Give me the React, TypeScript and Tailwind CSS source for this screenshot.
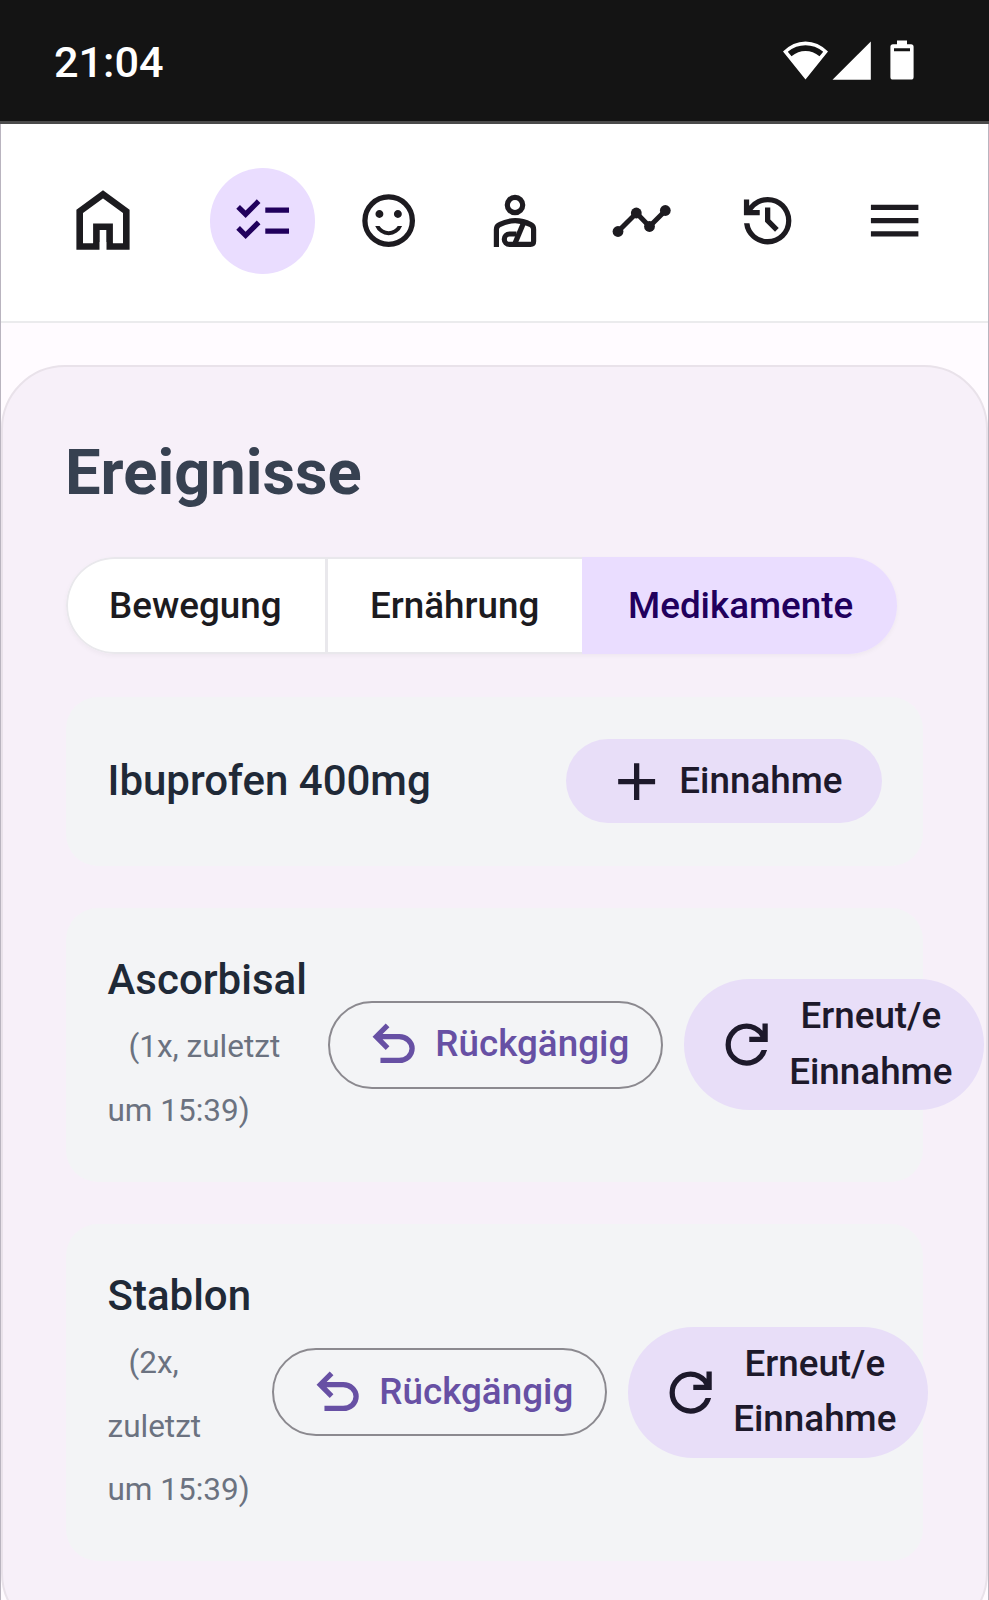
import React from "react";

const NAV = "#1d1b20";

function HomeIcon() {
  return (
    <svg className="w-[54px] h-[60px]" viewBox="0 0 54 60" fill="none" stroke="#1c1b1f" strokeWidth="6.6">
      <path d="M3.7 56.500V21.400L27 4.300 50.300 21.400V56.500H33.600V36.700H20.400V56.500Z" />
      <path d="M23.700 52h6.600v8h-6.600z" fill="#fff" stroke="none" />
    </svg>
  );
}

function Glyph({ d, color, className }: { d: string; color: string; className: string }) {
  return (
    <svg className={className} viewBox="0 -960 960 960" fill={color}>
      <path d={d} />
    </svg>
  );
}

const CHECKLIST =
  "M222-200 80-342l56-56 85 85 170-170 56 57-225 226Zm0-320L80-662l56-56 85 85 170-170 56 57-225 226Zm298 240v-80h360v80H520Zm0-320v-80h360v80H520Z";
const SMILE =
  "M620-520q25 0 42.500-17.500T680-580q0-25-17.500-42.500T620-640q-25 0-42.500 17.500T560-580q0 25 17.500 42.500T620-520Zm-280 0q25 0 42.500-17.500T400-580q0-25-17.500-42.500T340-640q-25 0-42.500 17.500T280-580q0 25 17.500 42.500T340-520Zm140 260q68 0 123.500-38.500T684-400h-66q-22 37-58.500 58.500T480-320q-43 0-79.500-21.500T342-400h-66q25 63 80.500 101.500T480-260Zm0 180q-83 0-156-31.500T197-197q-54-54-85.500-127T80-480q0-83 31.500-156T197-763q54-54 127-85.500T480-880q83 0 156 31.500T763-763q54 54 85.500 127T880-480q0 83-31.500 156T763-197q-54 54-127 85.500T480-80Zm0-80q134 0 227-93t93-227q0-134-93-227t-227-93q-134 0-227 93t-93 227q0 134 93 227t227 93Z";
const HISTORY =
  "M480-120q-138 0-240.500-91.500T122-440h82q14 104 92.500 172T480-200q117 0 198.500-81.500T760-480q0-117-81.500-198.500T480-760q-69 0-129 32t-101 88h110v80H120v-240h80v94q51-64 124.500-99T480-840q75 0 140.500 28.500t114 77q48.500 48.500 77 114T840-480q0 75-28.500 140.500t-77 114q-48.500 48.500-114 77T480-120Zm112-192L440-464v-216h80v184l128 128-56 56Z";
const REFRESH =
  "M480-160q-134 0-227-93t-93-227q0-134 93-227t227-93q69 0 132 28.500T720-690v-110h80v280H520v-80h168q-32-56-87.500-88T480-720q-100 0-170 70t-70 170q0 100 70 170t170 70q77 0 139-44t87-116h84q-28 106-114 173t-196 67Z";
const UNDO =
  "M280-200v-80h284q63 0 109.500-40T720-420q0-60-46.500-100T564-560H312l104 104-56 56-200-200 200-200 56 56-104 104h252q97 0 166.500 63T800-420q0 94-69.500 157T564-200H280Z";
const PLUS = "M440-440H200v-80h240v-240h80v240h240v80H520v240h-80v-240Z";
const MENU = "M120-240v-80h720v80H120Zm0-200v-80h720v80H120Zm0-200v-80h720v80H120Z";

function PersonIcon() {
  return (
    <svg className="w-[44px] h-[54px]" viewBox="0 0 44 54" fill="none" stroke={NAV} strokeWidth="5.2">
      <circle cx="22" cy="11" r="7.700" />
      <path d="M3.400 53V35.500Q3.400 32 6.500 30.600C17 25.400 27.500 25.400 37.800 30.600Q40.600 32 40.600 35.500V47.300Q40.600 50.400 37.500 50.400H16.500A5.200 5.200 0 0 1 16.500 40H23.500" />
      <path d="M30.500 29 21.500 50.400" />
    </svg>
  );
}

function TrendIcon() {
  return (
    <svg className="ml-[2px] w-[60px] h-[34px]" viewBox="0 0 60 34" fill={NAV} stroke={NAV}>
      <path d="M6 27.500 24.500 9 37.500 22.500 53.500 6.500" fill="none" strokeWidth="5" />
      <circle cx="6" cy="27.500" r="5.400" stroke="none" />
      <circle cx="24.300" cy="9" r="5.400" stroke="none" />
      <circle cx="37.500" cy="22.500" r="5.400" stroke="none" />
      <circle cx="53.300" cy="6.500" r="5.400" stroke="none" />
    </svg>
  );
}

function StatusIcons() {
  return (
    <svg className="mb-[2px] h-[42px] w-[132px]" viewBox="0 0 132 42" fill="#fff">
      <path fillRule="evenodd" d="M23.500 40.500 1 12.500Q11 2.500 23.500 2.500T46 12.500ZM5.800 12.700 9.500 17.200Q16 12 23.500 12T37.500 17.200L41.200 12.700Q33 6.300 23.500 6.300T5.800 12.700Z" />
      <path d="M50.500 40.800 88.800 2.500V40.800Z" />
      <path fillRule="evenodd" d="M115 1.500h10v3.700h4q2.600 0 2.600 2.600V38q0 2.600-2.600 2.600h-18q-2.600 0-2.600-2.600V7.800q0-2.600 2.600-2.600h4ZM112 9.200v3h16v-3Z" />
    </svg>
  );
}

function NavItem({ active, children }: { active?: boolean; children: React.ReactNode }) {
  return (
    <div className={`flex size-[105.5px] shrink-0 items-center justify-center rounded-full ${active ? "bg-[#eaddff]" : ""}`}>
      {children}
    </div>
  );
}

function UndoButton() {
  return (
    <button className="flex h-[88px] w-[335.500px] shrink-0 items-center rounded-full border-2 border-[#8b898f] pl-[32px] font-medium text-[#6750a4]">
      <Glyph d={UNDO} color="#6750a4" className="size-[63.300px]" />
      <span className="ml-[10.500px] pb-px text-[36.800px]">Rückgängig</span>
    </button>
  );
}

function AgainButton() {
  return (
    <button className="ml-[20.500px] flex h-[131px] w-[300px] shrink-0 items-center rounded-full bg-[#e8def8] pl-[31.500px] font-medium text-[#1d192b]">
      <Glyph d={REFRESH} color="#1d192b" className="size-[63.300px]" />
      <span className="ml-[10.500px] w-[164px] pb-[2px] text-center text-[36.800px] leading-[55.5px]">
        Erneut/e
        <br />
        Einnahme
      </span>
    </button>
  );
}

function Item({ name, lines, height, labelWidth }: { name: string; lines: string[]; height: string; labelWidth: string }) {
  return (
    <section className={`flex items-center rounded-[32px] bg-[#f3f4f6] pl-[41.500px] ${height}`}>
      <div className={`-mt-[3px] shrink-0 whitespace-nowrap text-[31.500px] leading-[63.3px] text-[#6b7280] ${labelWidth}`}>
        <div className="text-[42px] font-medium text-[#1f2937]">{name}</div>
        <div className="-mb-[4px] pt-[4px]">
          <div className="pl-[21px]">{lines[0]}</div>
          {lines.slice(1).map((l) => (
            <div key={l}>{l}</div>
          ))}
        </div>
      </div>
      <UndoButton />
      <AgainButton />
    </section>
  );
}

export default function App() {
  return (
    <div className="flex h-[1600px] w-[989px] flex-col overflow-hidden bg-[#fffbff] font-[Roboto,sans-serif]">
      <header className="flex h-[124px] shrink-0 items-center justify-between border-b-[3px] border-[#4b4b4b] bg-[#141414] pr-[75px] pl-[54px]">
        <span className="pt-[4px] text-[43.2px] leading-[50px] font-medium text-white">21:04</span>
        <StatusIcons />
      </header>
      <div className="flex min-h-0 flex-1 flex-col border-x border-[#b9b4bf]">
        <nav className="flex h-[199px] shrink-0 items-center border-b-2 border-[#ebebed] bg-white pb-[3px]">
          <div className="mr-[54px] ml-[49px] flex w-[105.500px] items-center justify-center pb-[2px]">
            <HomeIcon />
          </div>
          <div className="flex gap-[20.900px]">
            <NavItem active>
              <Glyph d={CHECKLIST} color="#21005d" className="size-[63.300px]" />
            </NavItem>
            <NavItem>
              <Glyph d={SMILE} color={NAV} className="size-[63.300px]" />
            </NavItem>
            <NavItem>
              <PersonIcon />
            </NavItem>
            <NavItem>
              <TrendIcon />
            </NavItem>
            <NavItem>
              <Glyph d={HISTORY} color={NAV} className="size-[63.300px]" />
            </NavItem>
            <NavItem>
              <Glyph d={MENU} color={NAV} className="size-[63.300px]" />
            </NavItem>
          </div>
        </nav>
        <main className="mt-[42px] flex h-[1272px] shrink-0 flex-col rounded-[64px] border-2 border-[#e9e2ea] bg-[#f7f0f9] pl-[63px]">
          <h1 className="-ml-px mt-[67px] text-[63.3px] leading-[76px] font-bold text-[#374151]">Ereignisse</h1>
          <div className="mt-[47px] flex h-[97px] w-[831px] overflow-hidden rounded-full text-[36.800px] font-medium text-[#1c1b1f] shadow-[0_2px_5px_rgba(0,0,0,0.04)]">
            <div className="flex w-[262px] items-center rounded-l-full border-2 border-r-[3px] border-[#e9e8ec] bg-white pl-[41px]">
              Bewegung
            </div>
            <div className="flex w-[254px] items-center border-y-2 border-[#e9e8ec] bg-white pl-[42px]">Ernährung</div>
            <div className="flex flex-1 items-center bg-[#eaddff] pl-[46px] text-[#21005d]">Medikamente</div>
          </div>
          <div className="mt-[43px] flex w-[857px] flex-col gap-[42px]">
            <section className="flex h-[168.500px] items-center justify-between rounded-[32px] bg-[#f3f4f6] pr-[41px] pl-[41.500px]">
              <span className="pb-[2px] text-[42px] font-medium text-[#1f2937]">Ibuprofen 400mg</span>
              <button className="flex h-[84px] w-[316px] items-center rounded-full bg-[#e8def8] pl-[39px] font-medium text-[#1d192b]">
                <Glyph d={PLUS} color="#1d192b" className="size-[63.300px]" />
                <span className="ml-[11px] pb-[2px] text-[36.800px]">Einnahme</span>
              </button>
            </section>
            <Item name="Ascorbisal" lines={["(1x, zuletzt", "um 15:39)"]} height="h-[274px]" labelWidth="w-[220px]" />
            <Item name="Stablon" lines={["(2x,", "zuletzt", "um 15:39)"]} height="h-[337.500px]" labelWidth="w-[164px]" />
          </div>
        </main>
      </div>
    </div>
  );
}
